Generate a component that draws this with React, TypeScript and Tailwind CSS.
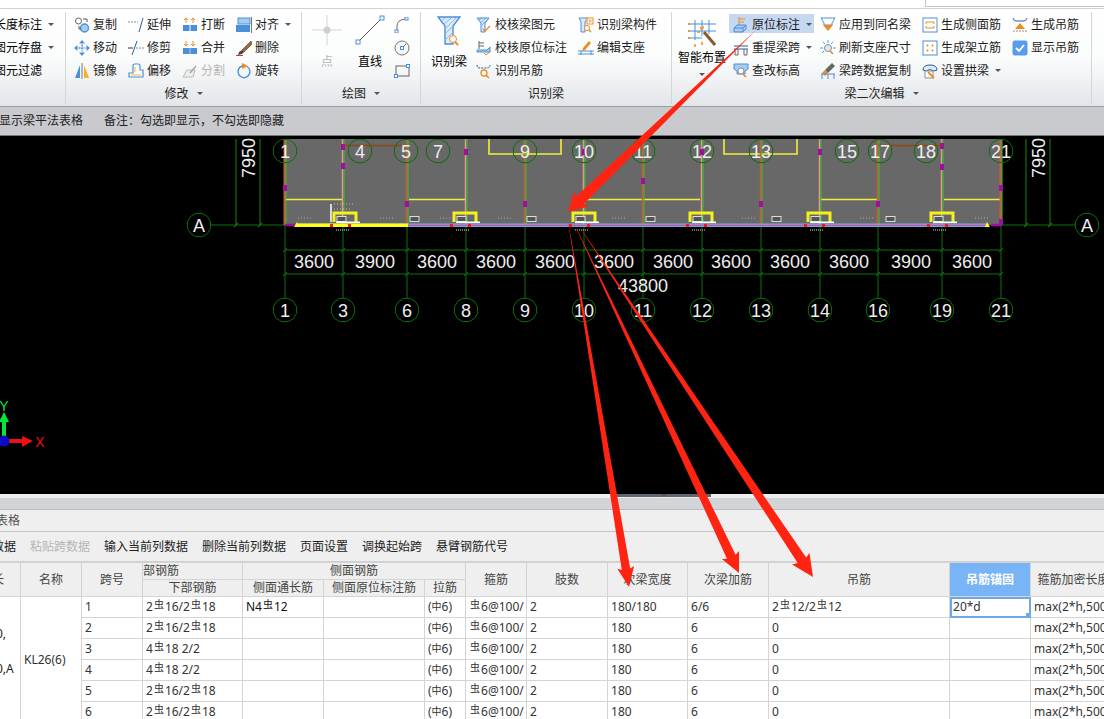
import type { ReactNode } from 'react';

const CJK = { fontFamily: '"Noto Sans", "Noto Sans CJK SC", sans-serif' };

const B = '#4a90d9';
const L = '#a9c9ee';
const O = '#f08a1d';
const G = '#8a8f96';

const hatch = 'M3 3l3-2M4 6l6-5M6 8l6-6';

const icons: Record<string, ReactNode> = {
  copy: <><circle cx="4.5" cy="4" r="3" fill="#fff" stroke="#666" /><circle cx="10.5" cy="11" r="4" fill={L} stroke={B} strokeWidth="1.4" /><path d="M9 2h4v3M5 9v3h2" fill="none" stroke="#555" /></>,
  extend: <><path d="M0 5h10" stroke={G} strokeDasharray="2 1" /><path d="M11 15l4-14" stroke="#2b5f9e" /></>,
  brk: <><path d="M4 1v5M2 3l2-2 2 2M11 1v5M9 3l2-2 2 2" stroke={O} fill="none" /><rect x="1" y="8" width="6.5" height="6" fill={B} /><rect x="8.5" y="8" width="6.5" height="6" fill={B} /></>,
  align: <><rect x="2" y="1" width="12" height="6" fill={L} stroke={B} /><rect x="0" y="8" width="14" height="7" fill={B} /><path d="M15.5 0v16" stroke="#777" /></>,
  move: <><path d="M8 0l3 3.5H5zM8 16l3-3.5H5zM0 8l3.5-3v6zM16 8l-3.5-3v6z" fill={B} /><path d="M8 4.5v7M4.5 8h7" stroke={B} strokeDasharray="2 1" strokeWidth="1.5" /></>,
  trim: <><path d="M0 8h5" stroke="#333" /><path d="M8 8h8" stroke={G} strokeDasharray="2 1" /><path d="M4 15L9 1" stroke="#2b5f9e" /></>,
  merge: <><path d="M4 1v5M2 4l2 2 2-2M11 1v5M9 4l2 2 2-2" stroke={O} fill="none" /><rect x="1" y="8" width="14" height="6" fill={B} /><path d="M8 8v6" stroke={L} /></>,
  del: <><path d="M15 1L6 10l2 2 8-8z" fill="#a0673a" stroke="#5d3b1f" strokeWidth=".6" /><path d="M6 10l-3 2-1 3 4-1 2-2z" fill="#444" /><path d="M0 15.5h7" stroke="#d33" /></>,
  mirror: <><path d="M6 2v13H1z" fill={B} /><path d="M10 2v13h5z" fill="#f5b324" /><path d="M8 0v16" stroke="#777" /></>,
  offset: <><path d="M1 14v-4h4V3q0-2 2-2h3q2 0 2 2v4h3v7z" fill="#fff" stroke={B} strokeWidth="1.2" /><path d="M3 12h10M7 9V4" stroke="#f5b324" fill="none" /></>,
  split: <><path d="M1 14l4-7h8l-2 7z" fill="#eee" stroke="#bbb" /><path d="M8 10l6-7" stroke="#aaa" strokeWidth="1.6" /></>,
  rotate: <><path d="M6 3a6 6 0 1 0 5 .5" fill="none" stroke={B} strokeWidth="1.4" /><path d="M6 0l6 3-6 3z" fill={O} /></>,
  arc: <><path d="M3 14V9q0-6 8-7" fill="none" stroke="#666" /><rect x="1" y="13" width="3" height="3" fill="#fff" stroke={B} /><rect x="11" y="0" width="3" height="3" fill="#fff" stroke={B} /></>,
  circle: <><circle cx="8" cy="8" r="7" fill="#f4f6f8" stroke="#777" /><rect x="6.5" y="6.5" width="3" height="3" fill="#fff" stroke={B} /><path d="M9 7l3-3" stroke="#777" /></>,
  rect: <><rect x="2" y="3" width="13" height="10" fill="none" stroke="#666" /><rect x="0.5" y="11.5" width="3" height="3" fill="#fff" stroke={B} /><rect x="12.5" y="1.5" width="3" height="3" fill="#fff" stroke={B} /></>,
  beamCheck: <><path d="M1 1h12l-4 5v9H5V6z" fill="#dce9f8" stroke={B} /><path d={hatch} stroke={B} strokeWidth=".7" /><path d="M7 12l2 2 5-5" fill="none" stroke={O} strokeWidth="1.3" /></>,
  beamPos: <><path d="M3 1v8M3 3h5M3 6h5" stroke="#666" fill="none" /><path d="M1 10h10l3-3v5H1z" fill={L} stroke={B} /><path d="M8 13l2 2 5-4" fill="none" stroke={O} /></>,
  hanger: <><path d="M1 2q0 3 3 3h7q3 0 3-3" fill="none" stroke="#2b5f9e" strokeDasharray="2 1" /><circle cx="8" cy="10" r="3" fill="#fff" stroke={O} strokeWidth="1.3" /><path d="M10 12l3 3" stroke={O} strokeWidth="1.5" /></>,
  member: <><path d="M1 1h9l-3 4v10H3V5z" fill="#dce9f8" stroke={B} /><rect x="9" y="1" width="6" height="6" fill="#fff" stroke={O} /><path d="M11 3h2v2h-2z" fill="none" stroke={O} strokeWidth=".7" /><circle cx="9" cy="11" r="2.5" fill="#fff" stroke={O} /><path d="M11 13l2 2" stroke={O} strokeWidth="1.4" /></>,
  support: <><path d="M5 8l6-7 2 2-6 7-3 1z" fill={O} /><path d="M0 11h16M0 14h16M3 11v4M13 11v4" stroke={B} fill="none" /></>,
  pos: <><path d="M6 0v9M6 2h6M6 5h5" stroke={O} fill="none" /><path d="M1 11l3-3h9v4l-3 3H1z" fill={L} stroke={B} /><path d="M1 11h9l3-3M10 11v4" stroke={B} fill="none" /></>,
  span: <><path d="M1 6h14M1 9h14" stroke="#2b5f9e" /><path d="M2 9v6h3V9M11 9v6h3V9" fill="none" stroke="#666" /></>,
  elev: <><path d="M1 1h14v5l-3 2v3H4V8L1 6z" fill={L} stroke={B} /><circle cx="8" cy="8" r="3" fill="#fff" stroke={G} /><path d="M10 11l3 3" stroke={O} strokeWidth="1.7" /></>,
  same: <><path d="M1 1h14l-3 5v2H4V6z" fill="#fff" stroke={B} /><path d="M3 8h10l-5 6z" fill={O} /></>,
  refresh: <><path d="M8 0v3M3 2l2 2M13 2l-2 2M0 8h3M13 8h3M2 13l2-2" stroke={B} strokeWidth=".9" /><circle cx="8" cy="8" r="3.5" fill="#dce9f8" stroke={G} /><path d="M10 11l3 3" stroke={O} strokeWidth="1.7" /></>,
  copySpan: <><path d="M12 0l3 3-7 7-3-3z" fill="#666" /><path d="M5 7l3 3-3 3-3-3z" fill={O} /><path d="M1 11h14M2 11v5M14 11v5M8 11v5" stroke={B} fill="none" /></>,
  side: <><rect x="1" y="1" width="14" height="14" fill="#fff" stroke={B} /><path d="M4 5h8M4 11h8M4 5v2M12 5v2M4 9v2M12 9v2" stroke={O} fill="none" /></>,
  frame: <><rect x="1" y="1" width="14" height="14" fill="#fff" stroke={B} /><path d="M5 5h1v1H5zM10 5h1v1h-1zM5 10h1v1H5zM10 10h1v1h-1z" fill={O} stroke={O} /></>,
  arch: <><path d="M1 7q0-5 7-5t7 5l-3 1q-4-3-8 0z" fill="#dce9f8" stroke="#2b5f9e" /><path d="M3 8h8v7H3z" fill="#fff" stroke={G} /><path d="M6 9l6 6" stroke={O} strokeWidth="1.8" /></>,
  genHanger: <><path d="M1 1q1 3 3 3h8q2 0 3-3" fill="none" stroke="#2b5f9e" /><path d="M8 6l5 6H3z" fill={O} /><path d="M1 14h14" stroke={G} strokeDasharray="2 1" /></>,
  check: <><rect x="0.5" y="0.5" width="15" height="15" rx="2.5" fill="#5a9cec" /><path d="M4 8l3 3 5-6" fill="none" stroke="#fff" strokeWidth="1.8" /></>,
};

const Icon = ({ name }: { name: string }) => (
  <svg viewBox="0 0 16 16" className="w-4 h-4 shrink-0">{icons[name]}</svg>
);

const Caret = ({ className = '' }: { className?: string }) => (
  <span className={`inline-block w-0 h-0 border-x-[3px] border-x-transparent border-t-[3px] border-t-[#555] ${className}`} />
);

const Item = ({ icon, text, caret, active, dim }: { icon: string; text: string; caret?: boolean; active?: boolean; dim?: boolean }) => (
  <div className={`flex items-center h-[23px] whitespace-nowrap ${active ? 'relative' : ''} ${dim ? 'text-[#b5b5b5]' : 'text-[#1c1c1c]'}`}>
    {active && <span className="absolute -left-[4px] top-[1px] w-[85px] h-[19px] bg-[#c6d8f0]" />}
    <span className="relative flex items-center gap-[3px]">
      <Icon name={icon} />
      <span>{text}</span>
      {caret && <Caret className="ml-[3px]" />}
    </span>
  </div>
);

const Group = ({ width, label, caret, children }: { width: string; label?: string; caret?: boolean; children: ReactNode }) => (
  <section className={`${width} shrink-0 flex flex-col border-r border-r-[#d4d7da] mt-[3px] mb-[2px]`}>
    <div className="flex h-[71px] pt-[1px]">{children}</div>
    <div className="flex-1 flex items-center justify-center gap-[8px] text-[#222]">
      {label}
      {caret && <Caret />}
    </div>
  </section>
);

const Col = ({ className, children }: { className: string; children: ReactNode }) => (
  <div className={`flex flex-col ${className}`}>{children}</div>
);

const Ribbon = () => (
  <header className="h-[107px] shrink-0 flex flex-col text-[12px] leading-none">
    <div className="h-[9px] bg-white border-b border-b-[#dadada] flex justify-end">
      <div className="w-[179px] h-[7px] border-l border-b border-[#c4c4c4]" />
    </div>
    <div className="flex-1 flex overflow-hidden bg-gradient-to-b from-white via-[#fbfcfc] to-[#e3e6e9] border-b border-b-[#9a9da1] shadow-[0_1px_2px_#777]">
      <Group width="w-[66px]">
        <Col className="-ml-[6px]">
          {['长度标注', '图元存盘', '图元过滤'].map((t, i) => (
            <div key={t} className="h-[23px] flex items-center gap-[6px] whitespace-nowrap">
              {t}
              {i < 2 && <Caret />}
            </div>
          ))}
        </Col>
      </Group>

      <Group width="w-[236px]" label="修改" caret>
        <Col className="w-[54px] ml-[8px]">
          <Item icon="copy" text="复制" />
          <Item icon="move" text="移动" />
          <Item icon="mirror" text="镜像" />
        </Col>
        <Col className="w-[54px]">
          <Item icon="extend" text="延伸" />
          <Item icon="trim" text="修剪" />
          <Item icon="offset" text="偏移" />
        </Col>
        <Col className="w-[54px]">
          <Item icon="brk" text="打断" />
          <Item icon="merge" text="合并" />
          <Item icon="split" text="分割" dim />
        </Col>
        <Col className="w-[60px]">
          <Item icon="align" text="对齐" caret />
          <Item icon="del" text="删除" />
          <Item icon="rotate" text="旋转" />
        </Col>
      </Group>

      <Group width="w-[119px]" label="绘图" caret>
        <Col className="w-[50px] items-center">
          <svg viewBox="0 0 30 30" className="w-[30px] h-[30px] mt-[2px] mb-[6px]">
            <path d="M15 0v30M0 15h30" stroke="#d5d5d5" />
            <circle cx="15" cy="15" r="3.5" fill="#cfcfcf" />
          </svg>
          <span className="text-[#b5b5b5] mt-[5px]">点</span>
        </Col>
        <Col className="w-[36px] items-center">
          <svg viewBox="0 0 30 30" className="w-[30px] h-[30px] mt-[2px] mb-[6px]">
            <path d="M3 27L27 3" stroke="#555" />
            <rect x="1" y="25" width="4" height="4" fill="#fff" stroke={B} />
            <rect x="25" y="1" width="4" height="4" fill="#fff" stroke={B} />
          </svg>
          <span className="mt-[5px]">直线</span>
        </Col>
        <Col className="ml-[6px]">
          {['arc', 'circle', 'rect'].map(n => (
            <div key={n} className="h-[23px] flex items-center"><Icon name={n} /></div>
          ))}
        </Col>
      </Group>

      <Group width="w-[251px]" label="识别梁">
        <Col className="w-[40px] ml-[8px] items-center">
          <svg viewBox="0 0 24 30" className="w-6 h-[30px] mt-[3px]">
            <path d="M1 1h22l-7 9v18H8V10z" fill="#dce9f8" stroke={B} strokeWidth="1.4" />
            <path d="M4 5l4-3M6 9l8-7M8 13l11-11M8 18l8-8M8 24l8-8" stroke="#8db8e8" />
            <circle cx="16" cy="23" r="3.5" fill="#fff" stroke={O} />
            <path d="M18 26l3 3" stroke={O} strokeWidth="2" />
          </svg>
          <span className="mt-[10px] whitespace-nowrap">识别梁</span>
        </Col>
        <Col className="w-[102px] ml-[7px]">
          <Item icon="beamCheck" text="校核梁图元" />
          <Item icon="beamPos" text="校核原位标注" />
          <Item icon="hanger" text="识别吊筋" />
        </Col>
        <Col>
          <Item icon="member" text="识别梁构件" />
          <Item icon="support" text="编辑支座" />
        </Col>
      </Group>

      <Group width="w-[420px]" label="梁二次编辑" caret>
        <Col className="w-[48px] ml-[6px] items-center">
          <svg viewBox="0 0 30 30" className="w-[30px] h-[30px] mt-[5px]">
            <path d="M8 2v20M15 2v16M22 2v14M1 6h28M1 13h28M1 20h14" stroke={B} fill="none" />
            <path d="M1 6h2M1 13h2M1 20h2M8 26v3M15 24v3" stroke={O} strokeWidth="1.5" />
            <path d="M17 14l11 13" stroke="#8a5a2b" strokeWidth="3" />
            <path d="M13 9l2 3M10 14l3 0M16 8v3" stroke={O} strokeWidth="1.3" />
          </svg>
          <span className="mt-[4px] whitespace-nowrap">智能布置</span>
          <Caret className="mt-[9px]" />
        </Col>
        <Col className="w-[91px] ml-[3px] pl-[4px]">
          <Item icon="pos" text="原位标注" caret active />
          <Item icon="span" text="重提梁跨" caret />
          <Item icon="elev" text="查改标高" />
        </Col>
        <Col className="w-[102px]">
          <Item icon="same" text="应用到同名梁" />
          <Item icon="refresh" text="刷新支座尺寸" />
          <Item icon="copySpan" text="梁跨数据复制" />
        </Col>
        <Col className="w-[90px]">
          <Item icon="side" text="生成侧面筋" />
          <Item icon="frame" text="生成架立筋" />
          <Item icon="arch" text="设置拱梁" caret />
        </Col>
        <Col>
          <Item icon="genHanger" text="生成吊筋" />
          <Item icon="check" text="显示吊筋" />
        </Col>
      </Group>
    </div>
  </header>
);

const axes = [285, 343, 407, 466, 525, 584, 643, 702, 761, 820, 878, 942, 1001];
const bottomLabels = ['1', '3', '6', '8', '9', '10', '11', '12', '13', '14', '16', '19', '21'];
const topBubbles: [number, string][] = [[285, '1'], [360, '4'], [406, '5'], [438, '7'], [525, '9'], [584, '10'], [643, '11'], [702, '12'], [761, '13'], [847, '15'], [880, '17'], [926, '18'], [1001, '21']];
const dims: [number, string][] = [[314, '3600'], [375, '3900'], [437, '3600'], [496, '3600'], [555, '3600'], [614, '3600'], [673, '3600'], [731, '3600'], [790, '3600'], [849, '3600'], [911, '3900'], [972, '3600']];
const brackets = [333, 453, 572, 689, 807, 930];
const smallRects = [410, 527, 646, 772, 886];
const noise = [298, 380, 440, 498, 612, 742, 860, 975];
const beamYellow: [number, number][] = [[285, 342], [409, 465], [585, 700], [821, 877], [944, 1000]];
const magenta: [number, number][] = [[285, 188], [343, 147], [343, 166], [407, 204], [466, 152], [525, 204], [584, 152], [643, 181], [702, 152], [761, 204], [820, 152], [878, 204], [942, 167], [942, 146], [1001, 188], [1001, 222]];

const gon = (cx: number, cy: number, r: number) =>
  Array.from({ length: 12 }, (_, i) => {
    const a = (Math.PI / 6) * i + Math.PI / 12;
    return `${(cx + r * Math.cos(a)).toFixed(1)},${(cy + r * Math.sin(a)).toFixed(1)}`;
  }).join(' ');

const Bubble = ({ x, y, t }: { x: number; y: number; t: string }) => (
  <g>
    <polygon points={gon(x, y, 12)} fill="none" stroke="#0a6e0a" />
    <text x={x} y={y + 6.5} textAnchor="middle" fontSize="18" fill="#eee" fontFamily="Liberation Sans">{t}</text>
  </g>
);

const CadDrawing = () => (
  <svg viewBox="0 136 1104 358" className="block w-full h-full">
    <rect x="285" y="139" width="717" height="86" fill="#686868" />

    {/* dimension and axis lines */}
    {axes.map(x => (
      <g key={x} stroke="#0f730f">
        <line x1={x} y1="225" x2={x} y2="298" />
        <line x1={x - 2} y1="252" x2={x + 2} y2="248" />
        <line x1={x - 2} y1="276" x2={x + 2} y2="272" />
      </g>
    ))}
    <g stroke="#0f730f" fill="none" strokeWidth="1.2">
      <path d="M285 250H1001M285 274H1001M211 225H285M1002 225H1075M236 139V225M260 139V225M1026 139V225M1050 139V225" />
      <path d="M234 227l4-4M258 227l4-4M1024 227l4-4M1048 227l4-4" />
    </g>

    {/* beams */}
    {beamYellow.map(([a, b]) => <line key={a} x1={a} y1="199.5" x2={b} y2="199.5" stroke="#f3ee3a" strokeWidth="1.4" />)}
    <path d="M489 139v15h72v-15M724 139v15h73v-15" fill="none" stroke="#f3ee3a" strokeWidth="1.6" />
    {axes.map((x, i) => (
      <g key={x}>
        <line x1={x - 0.5} y1="139" x2={x - 0.5} y2="225" stroke={i % 2 ? '#f09090' : '#e0503a'} strokeWidth={i === 0 || i === 12 ? 2 : 1.5} />
        <line x1={x + 1} y1="139" x2={x + 1} y2="225" stroke="#22d022" />
      </g>
    ))}
    {magenta.map(([x, y]) => <rect key={`${x}-${y}`} x={x - 2} y={y - 3} width="4" height="6" fill="#a010a0" />)}
    <path d="M343 145.5H407M879 145.5H942" stroke="#8a4a10" strokeWidth="1.5" />
    <path d="M285 225h10M991 225h11" stroke="#a010a0" strokeWidth="2.5" />
    <rect x="297" y="223.5" width="690" height="3.5" fill="#7aa8dc" />
    <line x1="297" y1="225.3" x2="987" y2="225.3" stroke="#d0409a" />
    <rect x="297" y="223.5" width="111" height="3.5" fill="#ffff1a" />
    <path d="M294 227l3-5 2 5zM987 222l3 5h-5z" fill="#ffff1a" />
    {brackets.map(x => (
      <g key={x}>
        <path d={`M${x + 1} 222V213H${x + 23}V222`} fill="none" stroke="#f6f01e" strokeWidth="3" />
        <rect x={x + 4} y="216.5" width="9" height="5" fill="#555" stroke="#ddd" />
        <rect x={x + 3} y="221.5" width="24" height="1.6" fill="#fff" />
        <rect x={x - 3} y="224" width="3" height="3" fill="#f01818" />
        <rect x={x + 15} y="224" width="3" height="3" fill="#f01818" />
        <path d={`M${x + 3} 230h14`} stroke="#ddd" strokeDasharray="1 1" />
      </g>
    ))}
    {smallRects.map(x => <rect key={x} x={x} y="216.5" width="9" height="5" fill="#555" stroke="#ddd" />)}
    {noise.map(x => <path key={x} d={`M${x} 218h14`} stroke="#aaa" strokeDasharray="1 2" />)}
    <path d="M331 204v18" stroke="#fff" strokeWidth="1.5" />
    <path d="M334 204h20M334 209h18" stroke="#bbb" strokeDasharray="1 2" />

    {/* labels */}
    {topBubbles.map(([x, t]) => <Bubble key={`${x}-${t}`} x={x} y={151} t={t} />)}
    {axes.map((x, i) => <Bubble key={x} x={x} y={310} t={bottomLabels[i]} />)}
    <Bubble x={199} y={225} t="A" />
    <Bubble x={1087} y={225} t="A" />
    <g fontSize="18" fill="#eee" fontFamily="Liberation Sans" textAnchor="middle">
      {dims.map(([x, t]) => <text key={x} x={x} y={268}>{t}</text>)}
      <text x="643" y="292">43800</text>
      <text transform="translate(255 158) rotate(-90)">7950</text>
      <text transform="translate(1045 158) rotate(-90)">7950</text>
    </g>

    {/* axis widget */}
    <path d="M4 441V422" stroke="#00e83a" strokeWidth="4" />
    <path d="M4 412l5 10H-1z" fill="#00e83a" />
    <path d="M4 441h18" stroke="#f01010" strokeWidth="4" />
    <path d="M33 441l-11-5v11z" fill="#f01010" />
    <circle cx="4" cy="441" r="5.5" fill="#0a0ac8" />
    <text x="4" y="411" textAnchor="middle" fontSize="14" fill="#00e83a" fontFamily="Liberation Sans">Y</text>
    <text x="40" y="447" textAnchor="middle" fontSize="14" fill="#f01010" fontFamily="Liberation Sans">X</text>
  </svg>
);

const widths = [21, 61, 61, 100, 81, 101, 41, 61, 81, 80, 81, 181, 81, 86];

const Bar = () => (
  <span className="relative -top-[3px] mx-[1px] text-[10px]">虫</span>
);
const Steel = ({ v }: { v: string }) => (
  <>{v.split('#').map((s, i) => <span key={i}>{i > 0 && <Bar />}{s}</span>)}</>
);

const rows = [
  { bottom: '2#16/2#18', side: 'N4#12', w: '180/180', add: '6/6', hang: '2#12/2#12', anchor: '20*d' },
  { bottom: '2#16/2#18', side: '', w: '180', add: '6', hang: '0', anchor: '' },
  { bottom: '4#18 2/2', side: '', w: '180', add: '6', hang: '0', anchor: '' },
  { bottom: '4#18 2/2', side: '', w: '180', add: '6', hang: '0', anchor: '' },
  { bottom: '2#16/2#18', side: '', w: '180', add: '6', hang: '0', anchor: '' },
  { bottom: '2#16/2#18', side: '', w: '180', add: '6', hang: '0', anchor: '' },
];

const thClass = 'border border-[#d4d4d4] bg-[#efefef] font-normal text-[#444] overflow-hidden whitespace-nowrap p-0 text-center';
const tdClass = 'border border-[#d4d4d4] overflow-hidden whitespace-nowrap px-[3px] py-0 text-[#333]';

const BeamTable = () => (
  <div className="flex-1 overflow-hidden bg-white">
    <table className="table-fixed border-collapse w-[1116px] -ml-[1px] text-[12px] leading-none" style={CJK}>
      <colgroup>
        {widths.map((w, i) => <col key={i} style={{ width: w }} />)}
      </colgroup>
      <thead>
        <tr className="h-[17px]">
          <th rowSpan={2} className={thClass}><span className="block -ml-[8px] text-left">长</span></th>
          <th rowSpan={2} className={thClass}>名称</th>
          <th rowSpan={2} className={thClass}>跨号</th>
          <th className={`${thClass} text-left`}>部钢筋</th>
          <th colSpan={3} className={thClass}>侧面钢筋</th>
          <th rowSpan={2} className={thClass}>箍筋</th>
          <th rowSpan={2} className={thClass}>肢数</th>
          <th rowSpan={2} className={thClass}>次梁宽度</th>
          <th rowSpan={2} className={thClass}>次梁加筋</th>
          <th rowSpan={2} className={thClass}>吊筋</th>
          <th rowSpan={2} className={`${thClass} !bg-[#79b5f6] !text-white font-semibold border-[#5a9be0]`}>吊筋锚固</th>
          <th rowSpan={2} className={thClass}>箍筋加密长度</th>
        </tr>
        <tr className="h-[17px]">
          <th className={thClass}>下部钢筋</th>
          <th className={thClass}>侧面通长筋</th>
          <th className={thClass}>侧面原位标注筋</th>
          <th className={thClass}>拉筋</th>
        </tr>
      </thead>
      <tbody>
        {rows.map((r, i) => (
          <tr key={i} className="h-[21px]">
            {i === 0 && (
              <>
                <td rowSpan={6} className="border border-[#d4d4d4] overflow-hidden whitespace-nowrap p-0 text-[#222] align-middle">
                  <div className="-ml-[4px] pb-[16px] flex flex-col gap-[23px]">
                    <span>0,</span>
                    <span>0,A</span>
                  </div>
                </td>
                <td rowSpan={6} className={`${tdClass} text-[#222]`}>KL26(6)</td>
              </>
            )}
            <td className={tdClass}>{i + 1}</td>
            <td className={tdClass}><Steel v={r.bottom} /></td>
            <td className={`${tdClass} !text-[#111]`}><Steel v={r.side} /></td>
            <td className={tdClass} />
            <td className={tdClass}>(<span className="relative -top-[1px] text-[10px]">中</span>6)</td>
            <td className={tdClass}><Steel v="#6@100/" /></td>
            <td className={tdClass}>2</td>
            <td className={tdClass}>{r.w}</td>
            <td className={tdClass}>{r.add}</td>
            <td className={tdClass}><Steel v={r.hang} /></td>
            <td className={`${tdClass} relative ${r.anchor ? 'outline-2 -outline-offset-2 outline-[#6fa9ea] text-[#111]' : ''}`}>
              {r.anchor}
              {r.anchor && <span className="absolute right-[-1px] bottom-[-1px] w-[5px] h-[5px] bg-[#6fa9ea]" />}
            </td>
            <td className={tdClass}>max(2*h,500)</td>
          </tr>
        ))}
      </tbody>
    </table>
  </div>
);

const arrow = (x1: number, y1: number, x2: number, y2: number, w: number, hl: number, hw: number) => {
  const len = Math.hypot(x2 - x1, y2 - y1);
  const ux = (x2 - x1) / len;
  const uy = (y2 - y1) / len;
  const bx = x2 - ux * hl;
  const by = y2 - uy * hl;
  const pt = (c: number, d: number) => `${(bx - uy * c + ux * d).toFixed(1)},${(by + ux * c + uy * d).toFixed(1)}`;
  return [`${x1},${y1}`, pt(w / 2, 0), pt(hw / 2, -2), `${x2},${y2}`, pt(-hw / 2, -2), pt(-w / 2, 0)].join(' ');
};

const Arrows = () => (
  <svg viewBox="0 0 1104 719" className="absolute inset-0 w-full h-full pointer-events-none">
    <g fill="#ff2412">
      <polygon points={arrow(756, 30, 568, 212, 11, 17, 21)} />
      <polygon points={arrow(567, 215, 629, 587, 8.5, 18, 17)} />
      <polygon points={arrow(572, 219, 739, 573, 9.5, 18, 19)} />
      <polygon points={arrow(575, 220, 813, 577, 10, 20, 21)} />
    </g>
  </svg>
);

const App = () => {
  return (
    <div className="relative w-[1104px] h-[719px] overflow-hidden flex flex-col bg-white text-[12px]" style={CJK}>
      <Ribbon />

      <div className="h-[28px] shrink-0 bg-[#c8cacd] flex items-center gap-[21px] text-[#222] whitespace-nowrap -ml-[1px]">
        <span>显示梁平法表格</span>
        <span>备注：勾选即显示，不勾选即隐藏</span>
      </div>

      <main className="flex-1 min-h-0 bg-black border-t border-t-[#777]">
        <CadDrawing />
      </main>

      <div className="h-[4px] shrink-0 bg-[#eeeeee] flex justify-center pl-[224px]">
        <div className="w-[94px] h-[3px] bg-[#5f6670] flex justify-center">
          <Caret />
        </div>
      </div>

      <div className="h-[12px] shrink-0 bg-[#d2d4d8] border-b border-b-[#bcbcbc]" />
      <div className="h-[22px] shrink-0 bg-[#efefef] border-b border-b-[#c4c4c4] flex items-center text-[#555] -ml-[4px]">表格</div>
      <div className="h-[30px] shrink-0 bg-[#efefef] border-b border-b-[#cfcfcf] flex items-center gap-[14px] -ml-[8px] text-[#222] whitespace-nowrap">
        <span>数据</span>
        <span className="text-[#b5b5b5]">粘贴跨数据</span>
        <span>输入当前列数据</span>
        <span>删除当前列数据</span>
        <span>页面设置</span>
        <span>调换起始跨</span>
        <span>悬臂钢筋代号</span>
      </div>

      <div className="h-[157px] shrink-0 flex overflow-hidden">
        <BeamTable />
      </div>

      <Arrows />
    </div>
  );
};

export default App;
